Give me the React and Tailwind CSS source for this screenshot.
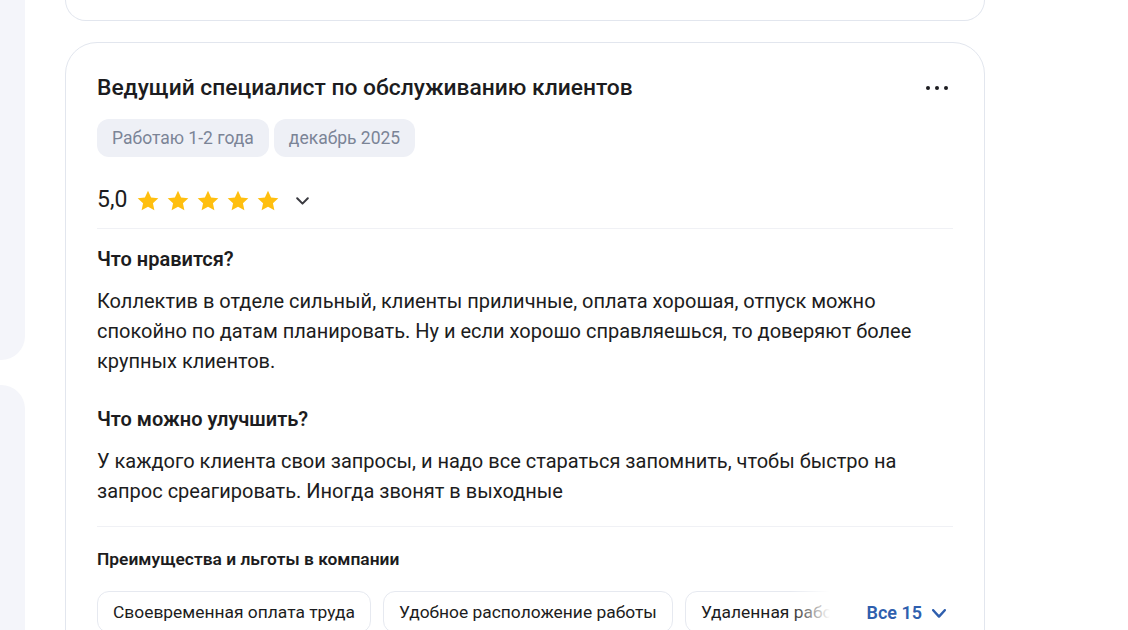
import React from "react";

const Star = () => (
  <svg width="22" height="21" viewBox="0 0 24 23" className="shrink-0">
    <path
      d="M12 0.8l3.4 7.3 7.9 0.9-5.9 5.4 1.6 7.8L12 18.3l-7 3.9 1.6-7.8L0.7 9l7.9-0.9z"
      fill="#ffbf0f"
    />
  </svg>
);

const Chevron = ({ w = 13, h = 8, color = "currentColor", sw = 2.2 }) => (
  <svg width={w} height={h} viewBox={`0 0 ${w} ${h}`} fill="none">
    <path
      d={`M1.2 1.2L${w / 2} ${h - 1.4}L${w - 1.2} 1.2`}
      stroke={color}
      strokeWidth={sw}
      strokeLinecap="round"
      strokeLinejoin="round"
    />
  </svg>
);

const Tag = ({ children }) => (
  <span className="h-[38px] px-[15px] flex items-center rounded-xl bg-[#eef0f6] text-[17.5px] text-[#7b8496]">
    {children}
  </span>
);

const Chip = ({ children }) => (
  <span className="h-[42px] px-[15px] flex items-center shrink-0 rounded-xl border border-[#e6e9f0] bg-white text-[17.4px] text-[#1c1c20] whitespace-nowrap">
    {children}
  </span>
);

const benefits = [
  "Своевременная оплата труда",
  "Удобное расположение работы",
  "Удаленная работа",
];

export default function App() {
  return (
    <div className="w-[1128px] h-[630px] overflow-hidden bg-white flex font-['Roboto',sans-serif] text-[#1c1c20]">
      {/* sidebar edges */}
      <aside className="w-[25px] shrink-0 flex flex-col gap-[25px]">
        <div className="h-[360px] shrink-0 bg-[#f4f5fa] rounded-br-[24px]" />
        <div className="flex-1 bg-[#f4f5fa] rounded-tr-[24px]" />
      </aside>

      <main className="ml-[40px] w-[920px] shrink-0 flex flex-col gap-[21px]">
        {/* previous review (bottom edge) */}
        <div className="h-[21px] shrink-0 border-x border-b border-[#e2e6ee] rounded-b-[32px]" />

        {/* review card */}
        <section className="shrink-0 border border-[#e2e6ee] rounded-[32px] px-[31px] pt-[31px] pb-8">
          <div className="flex items-center justify-between">
            <h2 className="text-[22.8px] leading-[28px] font-medium">
              Ведущий специалист по обслуживанию клиентов
            </h2>
            <button className="flex items-center gap-[5px] pr-[5px]">
              <span className="w-1 h-1 rounded-full bg-[#1c1c20]" />
              <span className="w-1 h-1 rounded-full bg-[#1c1c20]" />
              <span className="w-1 h-1 rounded-full bg-[#1c1c20]" />
            </button>
          </div>

          <div className="mt-[17px] flex gap-[5px]">
            <Tag>Работаю 1-2 года</Tag>
            <Tag>декабрь 2025</Tag>
          </div>

          <div className="mt-[27px] h-8 flex items-center">
            <span className="text-[23px] leading-8">5,0</span>
            <div className="ml-[10px] flex gap-2">
              <Star />
              <Star />
              <Star />
              <Star />
              <Star />
            </div>
            <span className="ml-[17px] mt-[2px]">
              <Chevron w={13} h={8} color="#3a3a40" sw={2} />
            </span>
          </div>

          <div className="mt-3 h-px bg-[#f0f1f5]" />

          <h3 className="mt-[17px] text-[20px] leading-[26px] font-semibold">Что нравится?</h3>
          <p className="mt-[14px] text-[20px] leading-[30px]">
            Коллектив в отделе сильный, клиенты приличные, оплата хорошая, отпуск можно
            спокойно по датам планировать. Ну и если хорошо справляешься, то доверяют более
            крупных клиентов.
          </p>

          <h3 className="mt-[30px] text-[20px] leading-[26px] font-semibold">Что можно улучшить?</h3>
          <p className="mt-[14px] text-[20px] leading-[30px]">
            У каждого клиента свои запросы, и надо все стараться запомнить, чтобы быстро на
            запрос среагировать. Иногда звонят в выходные
          </p>

          <div className="mt-5 h-px bg-[#f0f1f5]" />

          <h4 className="mt-5 text-[17.4px] leading-6 font-semibold">Преимущества и льготы в компании</h4>

          <div className="mt-5 relative flex gap-3 overflow-hidden">
            {benefits.map((b) => (
              <Chip key={b}>{b}</Chip>
            ))}
            <div className="absolute right-0 top-0 h-[42px] flex items-center">
              <div className="w-[40px] h-full bg-gradient-to-r from-white/0 to-white" />
              <button className="h-full pl-[36px] pr-[7px] bg-white flex items-center gap-[10px] text-[18px] font-semibold text-[#2f5fae]">
                Все 15
                <span className="mt-[2px]">
                  <Chevron w={14} h={9} sw={2.4} />
                </span>
              </button>
            </div>
          </div>
        </section>
      </main>
    </div>
  );
}
